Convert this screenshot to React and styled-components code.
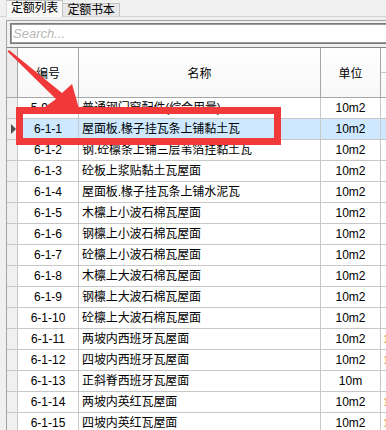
import React from 'react'
import styled, { createGlobalStyle } from 'styled-components'

const GlobalStyle = createGlobalStyle`
  html, body {
    margin: 0;
    padding: 0;
    background: #f0f0f0;
  }
  body {
    font-family: "Liberation Sans", "Noto Sans CJK SC", sans-serif;
    font-size: 12px;
    color: #000;
  }
`

const rows = [
  { id: '5-9-50', name: '普通钢门窗配件(综合用量)', unit: '10m2' },
  { id: '6-1-1', name: '屋面板.椽子挂瓦条上铺黏土瓦', unit: '10m2', selected: true },
  { id: '6-1-2', name: '钢.砼檩条上铺三层苇箔挂黏土瓦', unit: '10m2' },
  { id: '6-1-3', name: '砼板上浆贴黏土瓦屋面', unit: '10m2' },
  { id: '6-1-4', name: '屋面板.椽子挂瓦条上铺水泥瓦', unit: '10m2' },
  { id: '6-1-5', name: '木檩上小波石棉瓦屋面', unit: '10m2' },
  { id: '6-1-6', name: '钢檩上小波石棉瓦屋面', unit: '10m2' },
  { id: '6-1-7', name: '砼檩上小波石棉瓦屋面', unit: '10m2' },
  { id: '6-1-8', name: '木檩上大波石棉瓦屋面', unit: '10m2' },
  { id: '6-1-9', name: '钢檩上大波石棉瓦屋面', unit: '10m2' },
  { id: '6-1-10', name: '砼檩上大波石棉瓦屋面', unit: '10m2' },
  { id: '6-1-11', name: '两坡内西班牙瓦屋面', unit: '10m2', extra: '1' },
  { id: '6-1-12', name: '四坡内西班牙瓦屋面', unit: '10m2', extra: '1' },
  { id: '6-1-13', name: '正斜脊西班牙瓦屋面', unit: '10m' },
  { id: '6-1-14', name: '两坡内英红瓦屋面', unit: '10m2', extra: '1' },
  { id: '6-1-15', name: '四坡内英红瓦屋面', unit: '10m2', extra: '1' },
]

const Screen = styled.div`
  position: relative;
  width: 386px;
  height: 430px;
  overflow: hidden;
  background: #f0f0f0;
`

const TabBar = styled.div`
  box-sizing: border-box;
  display: flex;
  align-items: flex-end;
  height: 17px;
  padding-left: 6px;
  border-bottom: 1px solid #d4d4d4;
`

const Tab = styled.div`
  position: relative;
  z-index: ${p => (p.$active ? 1 : 0)};
  box-sizing: border-box;
  width: 57px;
  height: ${p => (p.$active ? 17 : 13)}px;
  margin-bottom: ${p => (p.$active ? -1 : 0)}px;
  border: 1px solid #c2c2c2;
  border-bottom: none;
  border-left: ${p => (p.$active ? '1px solid #d8d8d8' : 'none')};
  background: ${p => (p.$active ? '#f9f9f9' : '#e8e8e8')};
  font-size: 12px;
  line-height: ${p => (p.$active ? 14 : 12)}px;
  text-align: center;
  letter-spacing: -0.3px;
`

const Frame = styled.div`
  margin: 3px 0 0 6px;
  border-top: 1px solid #a3a3a3;
  border-left: 1px solid #a3a3a3;
`

const Search = styled.input`
  display: block;
  box-sizing: border-box;
  width: 400px;
  height: 21px;
  margin: 2px 0 0 3px;
  padding: 0 0 0 2px;
  border: 1px solid #7a7a7a;
  box-shadow: inset 0 0 0 1px #9c9c9c;
  background: #fff;
  font-family: "Liberation Sans", sans-serif;
  font-size: 13px;
  outline: none;

  &::placeholder {
    color: #b8b8b8;
    font-style: italic;
  }
`

const Grid = styled.div`
  display: grid;
  grid-template-columns: 11px 61px 242px 60px 100px;
  margin-top: 3px;
  border-top: 1px solid #858585;
`

const HeadCell = styled.div`
  box-sizing: border-box;
  height: 50px;
  display: flex;
  align-items: center;
  justify-content: center;
  border-right: 1px solid #a6a6a6;
  border-bottom: 1px solid #a6a6a6;
  background: ${p => (p.$gutter ? '#ececec' : 'linear-gradient(#ffffff, #f7f7f7)')};
  font-size: 12px;
`

const SplitHead = styled.div`
  box-sizing: border-box;
  height: 50px;
  display: flex;
  flex-direction: column;
  border-bottom: 1px solid #a6a6a6;
  background: linear-gradient(#ffffff, #f7f7f7);
`

const SplitPart = styled.div`
  flex: 1;
  border-bottom: ${p => (p.$top ? '1px solid #c6c6c6' : 'none')};
`

const Cell = styled.div`
  box-sizing: border-box;
  height: 21px;
  border-right: 1px solid #c8c8c8;
  border-bottom: 1px solid #c8c8c8;
  background: ${p => (p.$selected ? '#cde8ff' : '#fff')};
  line-height: 20px;
  text-align: center;
  white-space: nowrap;
  overflow: hidden;
  font-size: 12px;
`

const NameCell = styled(Cell)`
  padding-left: 3px;
  text-align: left;
  letter-spacing: -0.1px;
`

const ExtraCell = styled(Cell)`
  padding-left: 2px;
  border-right: none;
  text-align: left;
  color: #d9a060;
  font-size: 11px;
`

const Gutter = styled.div`
  box-sizing: border-box;
  height: 21px;
  display: flex;
  align-items: center;
  justify-content: center;
  border-right: 1px solid #c8c8c8;
  border-bottom: 1px solid #c8c8c8;
  background: #f0f0f0;
`

const Pointer = styled.span`
  width: 0;
  height: 0;
  margin-left: 2px;
  border-left: 5px solid #4e4e4e;
  border-top: 5px solid transparent;
  border-bottom: 5px solid transparent;
`

const Markup = styled.svg`
  position: absolute;
  left: 0;
  top: 0;
  pointer-events: none;
`

function App() {
  return (
    <Screen>
      <GlobalStyle />
      <TabBar>
        <Tab $active>定额列表</Tab>
        <Tab>定额书本</Tab>
      </TabBar>
      <Frame>
        <Search placeholder="Search..." />
        <Grid>
          <HeadCell $gutter />
          <HeadCell>编号</HeadCell>
          <HeadCell>名称</HeadCell>
          <HeadCell>单位</HeadCell>
          <SplitHead>
            <SplitPart $top />
            <SplitPart />
          </SplitHead>
          {rows.map(r => (
            <React.Fragment key={r.id}>
              <Gutter>{r.selected && <Pointer />}</Gutter>
              <Cell $selected={r.selected}>{r.id}</Cell>
              <NameCell $selected={r.selected}>{r.name}</NameCell>
              <Cell $selected={r.selected}>{r.unit}</Cell>
              <ExtraCell $selected={r.selected}>{r.extra}</ExtraCell>
            </React.Fragment>
          ))}
        </Grid>
      </Frame>

      {/* annotation: red arrow and highlight box */}
      <Markup width="386" height="430" viewBox="0 0 386 430">
        <polygon
          points="7.5,51.5 9,50 62,93 72,84 80,112 45,107 56,99"
          fill="#f2393a"
        />
        <rect
          x="19.5"
          y="110.5"
          width="258"
          height="31"
          fill="none"
          stroke="#f2393a"
          strokeWidth="7"
        />
      </Markup>
    </Screen>
  )
}

export default App
